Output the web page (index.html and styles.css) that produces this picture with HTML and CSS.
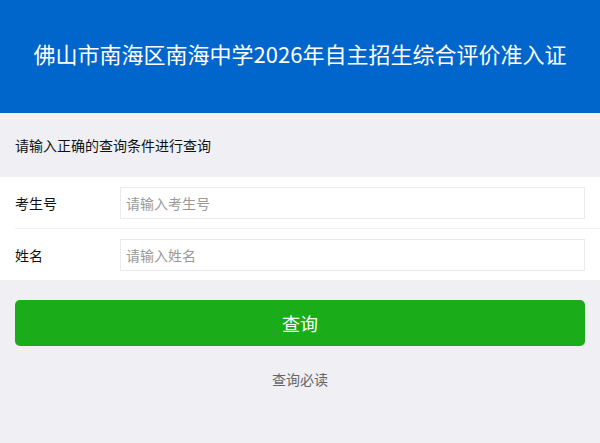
FILE: index.html
```html
<!DOCTYPE html>
<html lang="zh-CN">
<head>
    <meta charset="UTF-8">
    <meta name="viewport" content="width=device-width, initial-scale=1.0">
    <title>准入证查询</title>
    <link rel="stylesheet" href="styles.css">
</head>
<body>
    <header class="main-header">
        <h1>佛山市南海区南海中学2026年自主招生综合评价准入证</h1>
    </header>

    <div class="tips">请输入正确的查询条件进行查询</div>

    <form class="cells" onsubmit="return false">
        <div class="cell">
            <label class="cell-label" for="ksh">考生号</label>
            <input class="cell-input" type="text" id="ksh" placeholder="请输入考生号">
        </div>
        <div class="cell">
            <label class="cell-label" for="xm">姓名</label>
            <input class="cell-input" type="text" id="xm" placeholder="请输入姓名">
        </div>
    </form>

    <div class="btn-area">
        <button class="btn-primary" type="button">查询</button>
    </div>

    <div class="notice">
        <a href="#">查询必读</a>
    </div>
</body>
</html>
```

FILE: styles.css
```css
body, html {
    font-family: "Noto Sans CJK SC", "Noto Sans", sans-serif;
    background-color: #efeff4;
    color: #000;
    margin: 0;
    padding: 0;
}

/* Header */
.main-header {
    background-color: #0066cc;
    height: 113px;
    display: flex;
    align-items: center;
    justify-content: center;
    padding-bottom: 8px;
    box-sizing: border-box;
}

.main-header h1 {
    margin: 0;
    font-size: 22px;
    font-weight: normal;
    color: #fff;
    letter-spacing: 0;
}

/* Tips */
.tips {
    height: 64px;
    box-sizing: border-box;
    padding: 0 15px;
    display: flex;
    align-items: center;
    font-size: 14px;
    color: #111;
}

/* Form cells */
.cells {
    background-color: #fff;
    margin: 0;
}

.cell {
    height: 51px;
    display: flex;
    align-items: center;
    padding: 0 15px;
}

.cell + .cell {
    border-top: 1px solid #f0f0f0;
    margin-left: 15px;
    padding-left: 0;
}

.cell-label {
    width: 105px;
    font-size: 14px;
    color: #111;
}

.cell-input {
    flex: 1;
    height: 32px;
    box-sizing: border-box;
    border: 1px solid #ebebeb;
    padding: 0 5px;
    font-family: inherit;
    font-size: 14px;
    outline: none;
}

.cell-input::placeholder {
    color: #999;
}

/* Button */
.btn-area {
    padding: 20px 15px 0;
}

.btn-primary {
    width: 100%;
    height: 46px;
    border: none;
    border-radius: 5px;
    background-color: #1aad19;
    color: #fff;
    font-family: inherit;
    font-size: 18px;
    cursor: pointer;
}

/* Notice link */
.notice {
    text-align: center;
    margin-top: 23px;
    font-size: 14px;
}

.notice a {
    color: #666;
    text-decoration: none;
}
```
